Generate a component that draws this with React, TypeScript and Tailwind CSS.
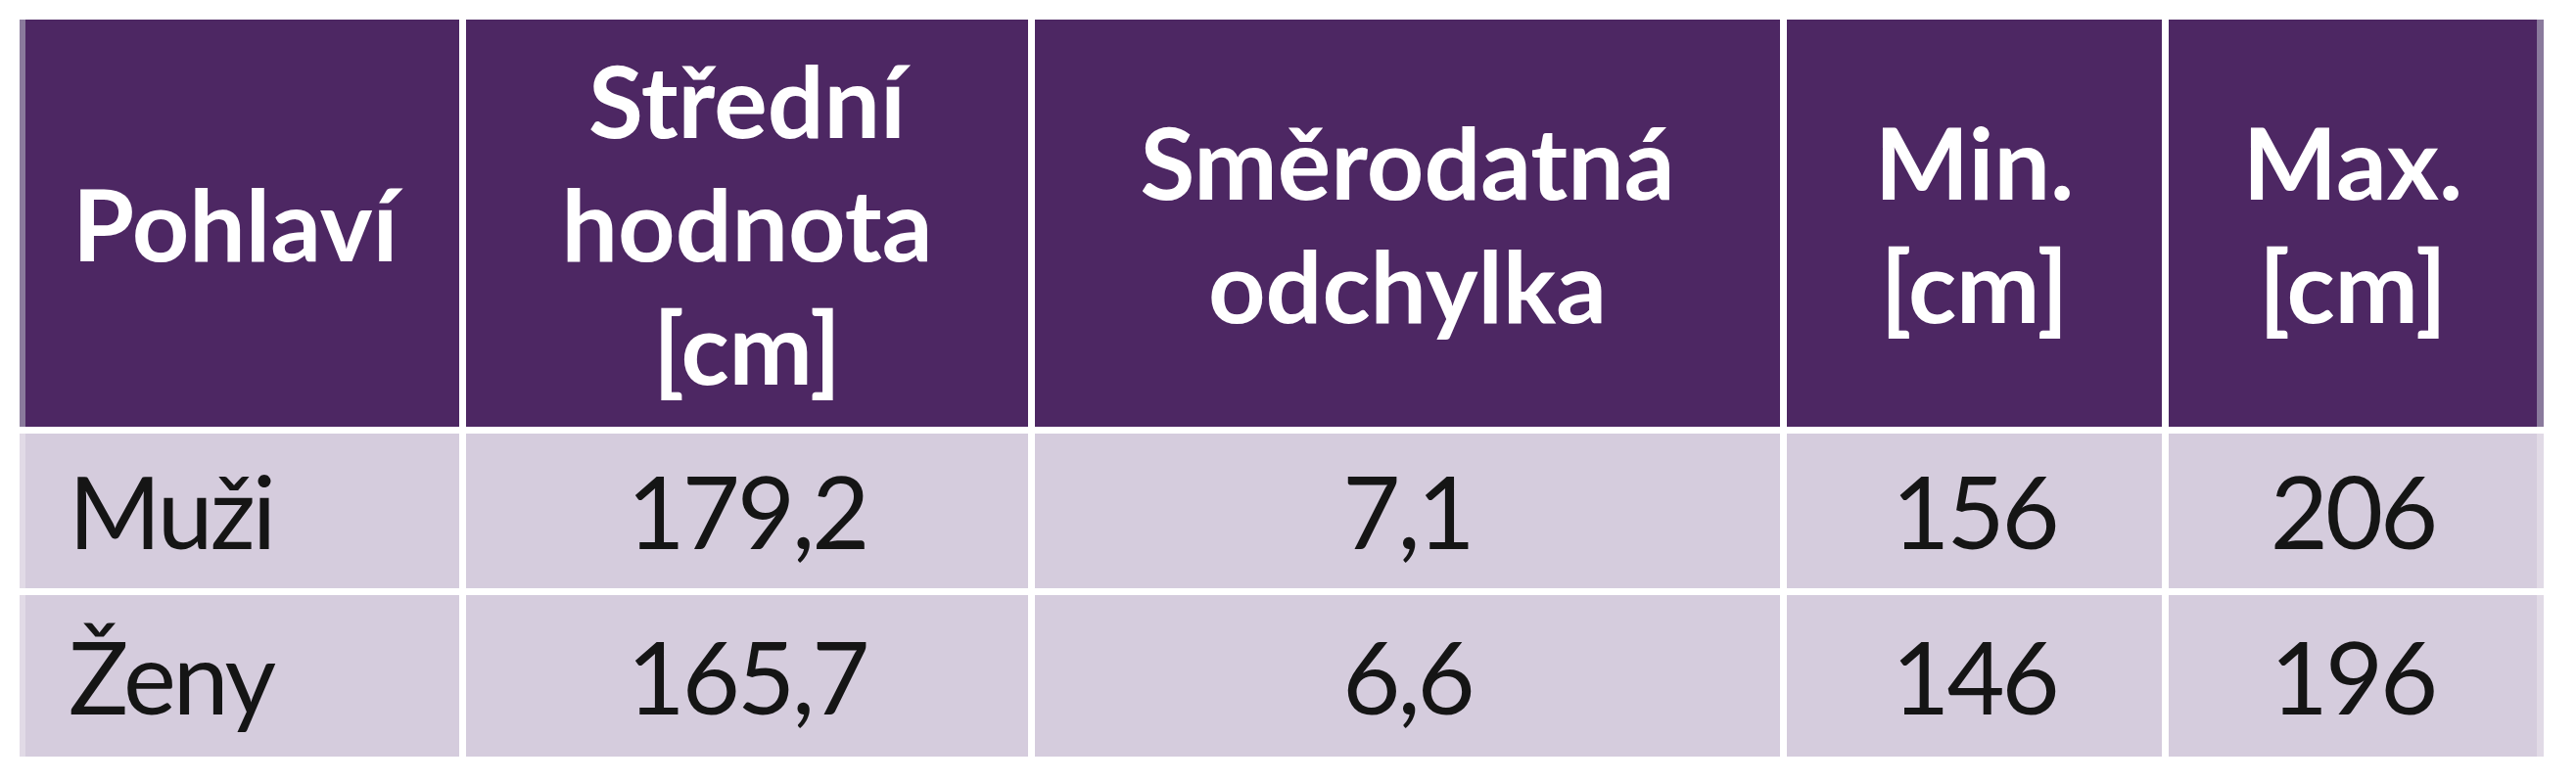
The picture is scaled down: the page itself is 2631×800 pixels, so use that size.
const header = [
  { lines: ['Pohlaví'], align: 'left' },
  { lines: ['Střední', 'hodnota', '[cm]'], align: 'center' },
  { lines: ['Směrodatná', 'odchylka'], align: 'center' },
  { lines: ['Min.', '[cm]'], align: 'center' },
  { lines: ['Max.', '[cm]'], align: 'center' },
];

const rows = [
  ['Muži', '179,2', '7,1', '156', '206'],
  ['Ženy', '165,7', '6,6', '146', '196'],
];

function edge(i: number, head: boolean) {
  if (i === 0) return head ? 'border-l-[6px] border-l-[#8a7a9c]' : 'border-l-[6px] border-l-[#e1dae6]';
  if (i === 4) return head ? 'border-r-[7px] border-r-[#8a7a9c]' : 'border-r-[7px] border-r-[#e1dae6]';
  return '';
}

export default function App() {
  return (
    <div className="w-full h-[800px] bg-white pl-[20px] pt-[20px] font-['Lato',sans-serif]">
      <div className="grid grid-cols-[449px_574px_761px_383px_383px] grid-rows-[416px_158px_165px] gap-[7px] w-[2578px]">
        {header.map((h, i) => (
          <div
            key={i}
            className={`bg-[#4d2763] text-white font-bold text-[102px] leading-[126px] flex flex-col justify-center ${
              h.align === 'left' ? 'items-start pl-[48px]' : 'items-center text-center'
            } ${edge(i, true)}`}
          >
            {h.lines.map((l) => (
              <span key={l}>{l}</span>
            ))}
          </div>
        ))}
        {rows.map((r, ri) =>
          r.map((c, ci) => (
            <div
              key={`${ri}-${ci}`}
              className={`bg-[#d5ccdd] text-[#151515] text-[102px] leading-[126px] tracking-[-3px] flex items-center ${
                ci === 0 ? 'justify-start pl-[44px]' : 'justify-center'
              } ${edge(ci, false)}`}
            >
              {c}
            </div>
          ))
        )}
      </div>
    </div>
  );
}
